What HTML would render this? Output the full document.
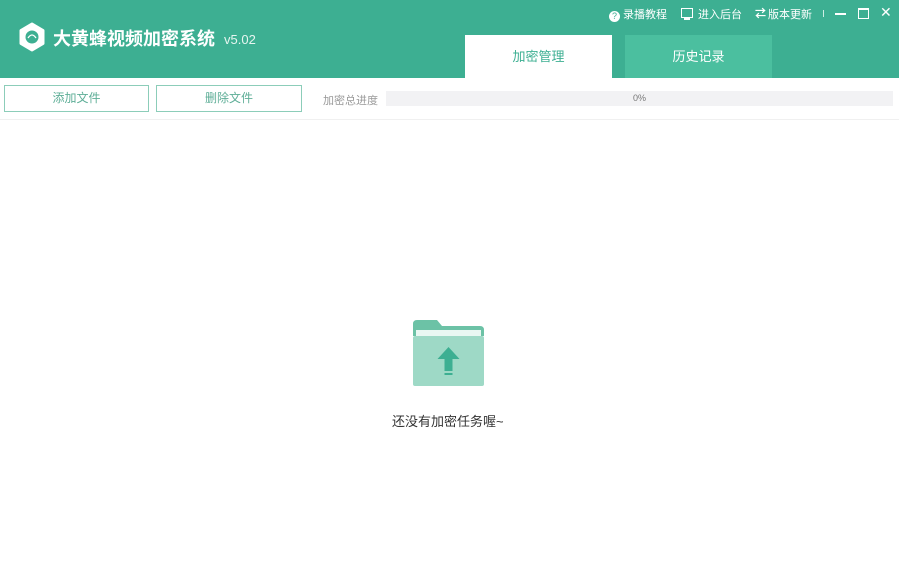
<!DOCTYPE html>
<html><head><meta charset="utf-8"><style>
body{margin:0;width:899px;height:573px;background:#fff;font-family:"Liberation Sans","Noto Sans CJK SC",sans-serif;position:relative;overflow:hidden}
.hd{position:absolute;left:0;top:0;width:899px;height:78px;background:#3daf92}
.abs{position:absolute;white-space:nowrap}
.btn{position:absolute;top:85px;height:27px;border:1px solid #8ccdb9;box-sizing:border-box;color:#5eae97;font-size:12px;text-align:center;line-height:25px}
</style></head><body>
<div class="hd"></div>
<svg class="abs" style="left:18px;top:22px" width="28" height="30" viewBox="0 0 28 30"><polygon points="14,2 25,8.5 25,21.5 14,28 3,21.5 3,8.5" fill="#fff" stroke="#fff" stroke-width="3" stroke-linejoin="round"/><circle cx="14" cy="15" r="6.5" fill="#3daf92"/><path d="M10,16 q4,-6 8,0" stroke="#fff" stroke-width="1.3" fill="none"/></svg>
<div class="abs" style="left:53px;top:25px;color:#fff;font-size:18px;font-weight:bold">大黄蜂视频加密系统</div>
<div class="abs" style="left:224px;top:32px;color:#e6f5f0;font-size:13px">v5.02</div>
<div class="abs" style="left:609px;top:6px;color:#fff;font-size:11px">
<span style="display:inline-block;width:11px;height:11px;border-radius:50%;background:#fff;color:#3daf92;font-size:9px;text-align:center;line-height:11px;vertical-align:-1px">?</span> 录播教程</div>
<div class="abs" style="left:681px;top:8px;width:10px;height:8px;border:1.5px solid #fff"></div>
<div class="abs" style="left:684px;top:18px;width:6px;height:1.5px;background:#fff"></div>
<div class="abs" style="left:698px;top:6px;color:#fff;font-size:11px">进入后台</div>
<div class="abs" style="left:755px;top:5px;color:#fff;font-size:11px;font-weight:bold">⇄</div>
<div class="abs" style="left:768px;top:6px;color:#fff;font-size:11px">版本更新</div>
<div class="abs" style="left:823px;top:10px;width:1px;height:7px;background:#cfeee5"></div>
<div class="abs" style="left:835px;top:13px;width:11px;height:1.5px;background:#fff"></div>
<div class="abs" style="left:858px;top:8px;width:9px;height:8px;border:1.5px solid #fff;border-top-width:2px"></div>
<div class="abs" style="left:880px;top:4px;color:#fff;font-size:14px">✕</div>
<div class="abs" style="left:465px;top:35px;width:147px;height:43px;background:#fff;color:#3daf92;font-size:13px;text-align:center;line-height:44px">加密管理</div>
<div class="abs" style="left:625px;top:35px;width:147px;height:43px;background:#4bbf9f;color:#fff;font-size:13px;text-align:center;line-height:44px">历史记录</div>
<div class="btn" style="left:4px;width:145px">添加文件</div>
<div class="btn" style="left:156px;width:146px">删除文件</div>
<div class="abs" style="left:323px;top:92px;color:#999;font-size:11px">加密总进度</div>
<div class="abs" style="left:386px;top:91px;width:507px;height:15px;background:#f2f2f4;color:#777;font-size:9px;text-align:center;line-height:15px">0%</div>
<div class="abs" style="left:0;top:119px;width:899px;height:1px;background:#f0f0f0"></div>
<svg class="abs" style="left:413px;top:320px" width="71" height="66" viewBox="0 0 71 66"><path d="M0,4 q0,-4 4,-4 h20 l5,6 h38 q4,0 4,4 v6 h-71z" fill="#6cc2a6"/><rect x="3" y="10" width="65" height="10" fill="#e9f7f2"/><rect x="0" y="16" width="71" height="50" rx="2" fill="#9ed9c6"/><path d="M35.5,27 l11,12 h-7 v12 h-8 v-12 h-7z" fill="#3daf92"/><rect x="31.5" y="53" width="8" height="2" fill="#3daf92"/></svg>
<div class="abs" style="left:392px;top:411px;color:#333;font-size:13px">还没有加密任务喔~</div>
</body></html>
